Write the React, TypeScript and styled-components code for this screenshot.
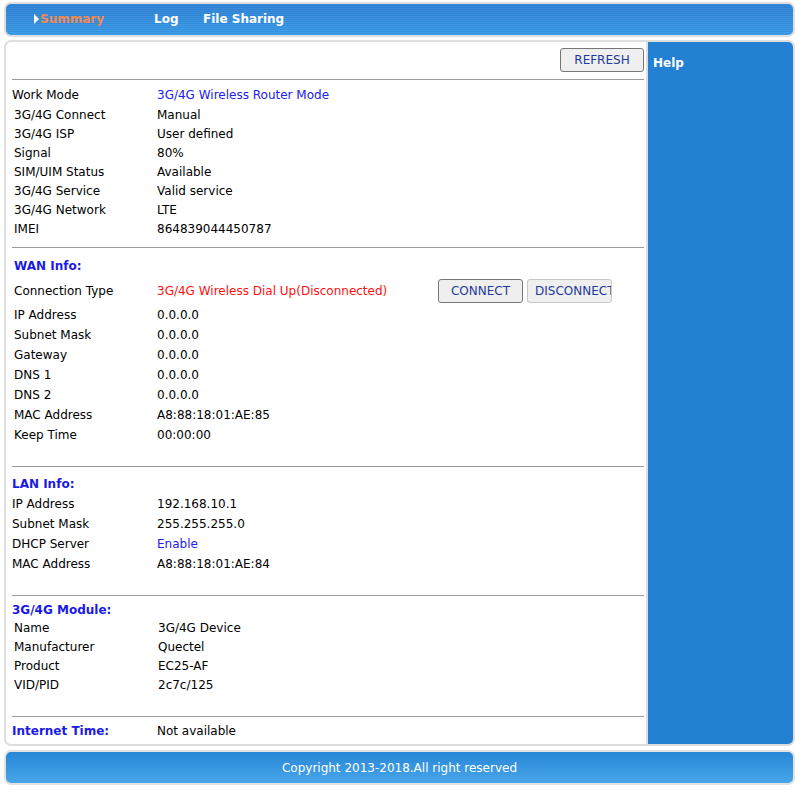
import React, { FC } from "react";
import styled, { createGlobalStyle } from "styled-components";

const GlobalStyle = createGlobalStyle`
  html, body {
    margin: 0;
    padding: 0;
    background: #ffffff;
  }
  body {
    font-family: "DejaVu Sans", Verdana, sans-serif;
    font-size: 12px;
    color: #000000;
  }
`;

const Page = styled.div`
  width: 803px;
  padding: 2px 8px 0 4px;
  box-sizing: border-box;
  display: flex;
  flex-direction: column;
`;

const TopNav = styled.div`
  height: 35px;
  box-sizing: border-box;
  border: 2px solid #dedede;
  border-radius: 7px;
  background: repeating-linear-gradient(
      to bottom,
      rgba(255, 255, 255, 0.07) 0 1px,
      rgba(0, 0, 0, 0.02) 1px 2px
    ),
    linear-gradient(#2b7fd4, #3598e6);
  display: flex;
  align-items: center;
  padding-left: 28px;
  font-weight: bold;
  font-size: 12px;
  color: #ffffff;
`;

const NavItem = styled.div<{ $active?: boolean; $w: number }>`
  width: ${({ $w }) => $w}px;
  display: flex;
  align-items: center;
  color: ${({ $active }) => ($active ? "#f5884e" : "#ffffff")};
  margin-top: -1px;
`;

const Arrow = styled.span`
  width: 0;
  height: 0;
  border-top: 5px solid transparent;
  border-bottom: 5px solid transparent;
  border-left: 5px solid #ffffff;
  margin-right: 1px;
`;

const Main = styled.div`
  display: flex;
  margin-top: 3px;
  height: 706px;
`;

const Content = styled.div`
  width: 643px;
  box-sizing: border-box;
  border: 2px solid #dedede;
  border-right-width: 1px;
  border-radius: 7px 0 0 7px;
  padding: 0 2px 0 6px;
  background: #ffffff;
`;

const Help = styled.div`
  flex: 1;
  box-sizing: border-box;
  border: 2px solid #dedede;
  border-left-width: 1px;
  border-radius: 0 7px 7px 0;
  background: #2380d2;
  color: #ffffff;
  font-weight: bold;
  font-size: 12px;
  padding: 14px 5px;
`;

const Toolbar = styled.div`
  display: flex;
  justify-content: flex-end;
  margin: 6px 0 7px;
`;

const Button = styled.button<{ $w: number; $disabled?: boolean }>`
  width: ${({ $w }) => $w}px;
  height: 24px;
  box-sizing: border-box;
  font-family: "DejaVu Sans", Verdana, sans-serif;
  font-size: 12px;
  color: #1d3a9c;
  background: #efefef;
  border: 1px solid ${({ $disabled }) => ($disabled ? "#c8c8c8" : "#767676")};
  border-radius: 3px;
  padding: 0 0 0 ${({ $disabled }) => ($disabled ? 7 : 0)}px;
  white-space: nowrap;
  overflow: hidden;
  text-align: ${({ $disabled }) => ($disabled ? "left" : "center")};
`;

const Divider = styled.div`
  height: 1px;
  background: #9a9a9a;
`;

const Section = styled.div<{ $top: number; $bottom: number }>`
  padding: ${({ $top, $bottom }) => `${$top}px 0 ${$bottom}px`};
`;

const Row = styled.div<{ $h: number }>`
  height: ${({ $h }) => $h}px;
  display: flex;
  align-items: center;
`;

const Label = styled.div<{ $indent?: boolean; $w?: number }>`
  width: ${({ $w }) => $w ?? 145}px;
  box-sizing: border-box;
  padding-left: ${({ $indent }) => ($indent ? 2 : 0)}px;
  flex-shrink: 0;
`;

const Value = styled.div<{ $tone?: "blue" | "red"; $w?: number }>`
  ${({ $w }) => ($w ? `width: ${$w}px;` : "")}
  color: ${({ $tone }) =>
    $tone === "blue" ? "#2020f0" : $tone === "red" ? "#ff1010" : "#000000"};
  white-space: nowrap;
`;

const Heading = styled.div<{ $indent?: boolean; $w?: number }>`
  width: ${({ $w }) => ($w ? `${$w}px` : "auto")};
  flex-shrink: 0;
  padding-left: ${({ $indent }) => ($indent ? 2 : 0)}px;
  box-sizing: border-box;
  color: #1a1ae6;
  font-weight: bold;
  font-size: 12px;
`;

const ButtonGroup = styled.div`
  display: flex;
  gap: 4px;
`;

const Footer = styled.div`
  margin-top: 4px;
  height: 35px;
  box-sizing: border-box;
  border: 2px solid #e2e2e2;
  border-radius: 7px;
  background: linear-gradient(#2886d7, #47a6e9);
  color: #ffffff;
  font-size: 12px;
  display: flex;
  align-items: center;
  justify-content: center;
`;

type Item = { label: string; value: string; tone?: "blue" | "red" };

const DataRows: FC<{ items: Item[]; h: number; indent?: boolean; labelW?: number }> = ({
  items,
  h,
  indent,
  labelW,
}) => (
  <>
    {items.map((it) => (
      <Row $h={h} key={it.label}>
        <Label $indent={indent} $w={labelW}>
          {it.label}
        </Label>
        <Value $tone={it.tone}>{it.value}</Value>
      </Row>
    ))}
  </>
);

const statusItems: Item[] = [
  { label: "3G/4G Connect", value: "Manual" },
  { label: "3G/4G ISP", value: "User defined" },
  { label: "Signal", value: "80%" },
  { label: "SIM/UIM Status", value: "Available" },
  { label: "3G/4G Service", value: "Valid service" },
  { label: "3G/4G Network", value: "LTE" },
  { label: "IMEI", value: "864839044450787" },
];

const wanItems: Item[] = [
  { label: "IP Address", value: "0.0.0.0" },
  { label: "Subnet Mask", value: "0.0.0.0" },
  { label: "Gateway", value: "0.0.0.0" },
  { label: "DNS 1", value: "0.0.0.0" },
  { label: "DNS 2", value: "0.0.0.0" },
  { label: "MAC Address", value: "A8:88:18:01:AE:85" },
  { label: "Keep Time", value: "00:00:00" },
];

const lanItems: Item[] = [
  { label: "IP Address", value: "192.168.10.1" },
  { label: "Subnet Mask", value: "255.255.255.0" },
  { label: "DHCP Server", value: "Enable", tone: "blue" },
  { label: "MAC Address", value: "A8:88:18:01:AE:84" },
];

const moduleItems: Item[] = [
  { label: "Name", value: "3G/4G Device" },
  { label: "Manufacturer", value: "Quectel" },
  { label: "Product", value: "EC25-AF" },
  { label: "VID/PID", value: "2c7c/125" },
];

const App: FC = () => {
  return (
    <Page>
      <GlobalStyle />
      <TopNav>
        <NavItem $active $w={120}>
          <Arrow />
          Summary
        </NavItem>
        <NavItem $w={49}>Log</NavItem>
        <NavItem $w={100}>File Sharing</NavItem>
      </TopNav>

      <Main>
        <Content>
          <Toolbar>
            <Button $w={84}>REFRESH</Button>
          </Toolbar>
          <Divider />

          <Section $top={5} $bottom={9}>
            <Row $h={20}>
              <Label>Work Mode</Label>
              <Value $tone="blue">3G/4G Wireless Router Mode</Value>
            </Row>
            <DataRows items={statusItems} h={19} indent />
          </Section>
          <Divider />

          <Section $top={8} $bottom={21}>
            <Row $h={20}>
              <Heading $indent>WAN Info:</Heading>
            </Row>
            <Row $h={25} style={{ marginTop: 2, marginBottom: 2 }}>
              <Label $indent>Connection Type</Label>
              <Value $tone="red" $w={281}>
                3G/4G Wireless Dial Up(Disconnected)
              </Value>
              <ButtonGroup>
                <Button $w={85}>CONNECT</Button>
                <Button $w={85} $disabled>
                  DISCONNECT
                </Button>
              </ButtonGroup>
            </Row>
            <DataRows items={wanItems} h={20} indent />
          </Section>
          <Divider />

          <Section $top={7} $bottom={21}>
            <Row $h={20}>
              <Heading>LAN Info:</Heading>
            </Row>
            <DataRows items={lanItems} h={20} />
          </Section>
          <Divider />

          <Section $top={5} $bottom={22}>
            <Row $h={17}>
              <Heading>3G/4G Module:</Heading>
            </Row>
            <DataRows items={moduleItems} h={19} indent labelW={146} />
          </Section>
          <Divider />

          <Section $top={4} $bottom={0}>
            <Row $h={19}>
              <Heading $w={145}>Internet Time:</Heading>
              <Value>Not available</Value>
            </Row>
          </Section>
        </Content>
        <Help>Help</Help>
      </Main>

      <Footer>Copyright 2013-2018.All right reserved</Footer>
    </Page>
  );
};

export default App;
